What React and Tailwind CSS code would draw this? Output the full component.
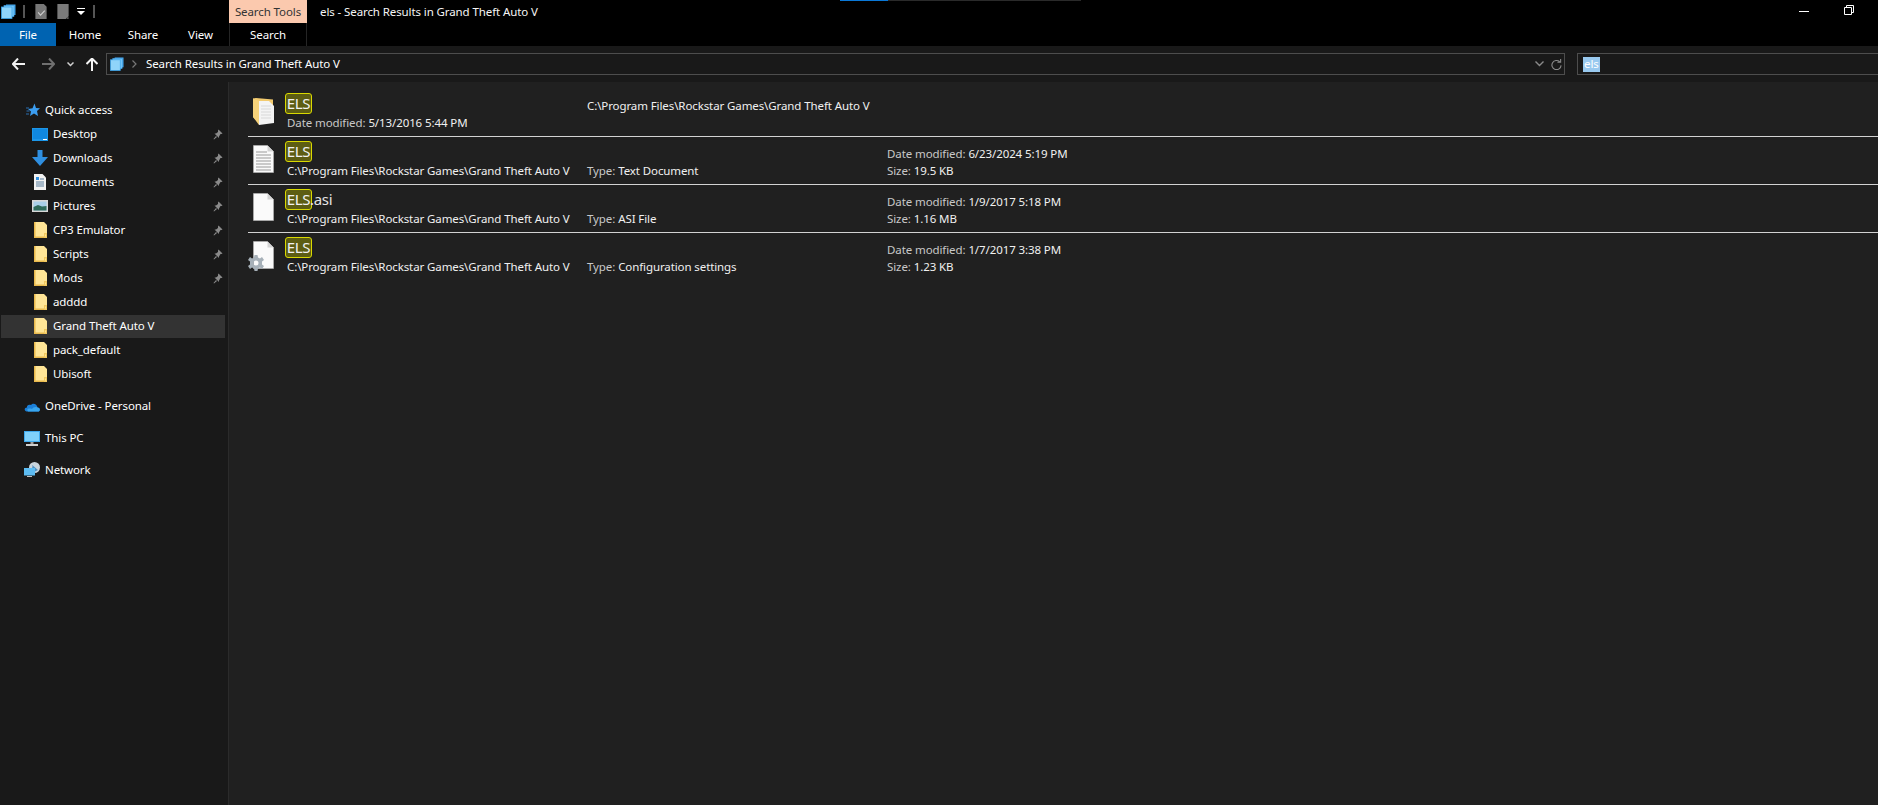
import React from 'react';

function StackIcon({ className }) {
  return (
    <svg viewBox="0 0 15 15" className={className}>
      <rect x="5" y="0.5" width="9.5" height="10.5" fill="#45a5ea" />
      <rect x="3" y="1.5" width="10" height="11" fill="#7cc9f7" stroke="#3a9de6" strokeWidth="0.6" />
      <rect x="0.5" y="3" width="10.5" height="11.5" fill="#8fd4fa" stroke="#39a3ea" strokeWidth="0.8" />
    </svg>
  );
}

function FolderIcon() {
  return (
    <svg viewBox="0 0 13 16" className="w-[13px] h-[16px] shrink-0">
      <path d="M0 0H10L13 3V16H0Z" fill="#ffe596" />
      <path d="M0 0H1.5V14.5H13V16H0Z" fill="#e9b94c" />
      <path d="M10 11H13V16H10Z" fill="#f2c85f" />
      <path d="M11 12.5H12V14.5H11Z" fill="#ffe596" />
    </svg>
  );
}

function PinIcon() {
  return (
    <svg viewBox="0 0 10 11" className="w-[10px] h-[11px] shrink-0">
      <path d="M5.5 0.5L9.5 4.5L8.5 5L7.5 5L6 7.5L6 9L1.5 4.5L3 4.5L5 3L5 1.5Z M3 7L0.5 10L1 10.5L4 8Z" fill="#8a8a8a" />
    </svg>
  );
}

function NavIcon({ type }) {
  if (type === 'star') {
    return (
      <svg viewBox="0 0 14 14" className="ml-[2px] w-[14px] h-[14px] shrink-0">
        <path d="M8.5 0.5L10 5L14 5.2L11 8L12 13L8 10.5L4 13L5 8.5L2 6L6.5 5.2Z" fill="#3b9df0" />
        <path d="M0 5H3M0.5 8H3.5M0 11H3" stroke="#2a6fb0" strokeWidth="1" />
      </svg>
    );
  }
  if (type === 'desktop') {
    return (
      <svg viewBox="0 0 16 13" className="w-[16px] h-[13px] shrink-0">
        <rect width="16" height="13" fill="#1c96e8" />
        <path d="M1 1H15V10L12 11H1Z" fill="#1088e0" />
        <path d="M11 11H15V12H11Z" fill="#ffffff" />
      </svg>
    );
  }
  if (type === 'downloads') {
    return (
      <svg viewBox="0 0 16 16" className="w-[16px] h-[16px] shrink-0">
        <path d="M5.5 0H10.5V7H16L8 16L0 7H5.5Z" fill="#2f8fe0" />
      </svg>
    );
  }
  if (type === 'documents') {
    return (
      <svg viewBox="0 0 12 16" className="w-[12px] h-[16px] shrink-0">
        <path d="M0 0H8.5L12 3.5V16H0Z" fill="#f2f2f2" />
        <path d="M2 3H5V6H2Z" fill="#2f8fe0" />
        <path d="M6 5H10M2 8H10M2 10H10M2 12H10" stroke="#5a7f9e" strokeWidth="1" />
      </svg>
    );
  }
  if (type === 'pictures') {
    return (
      <svg viewBox="0 0 16 12" className="w-[16px] h-[12px] shrink-0">
        <rect width="16" height="12" fill="#d8d8d8" />
        <rect x="1.5" y="1.5" width="13" height="9" fill="#a9cfe8" />
        <path d="M1.5 7L6 5L10 6.5L14.5 6V10.5H1.5Z" fill="#2f6b5a" />
      </svg>
    );
  }
  if (type === 'onedrive') {
    return (
      <svg viewBox="0 0 16 11" className="w-[16px] h-[11px] shrink-0">
        <path d="M4 10.5H14C16.5 10.5 16.5 6.5 13.5 6.5C13 3 9 1.5 7 4C4 3 2.5 5 3 6.5C0 6.5 -0.5 10.5 4 10.5Z" fill="#1b7fd8" />
        <path d="M4 10.5H14C16.5 10.5 16.5 6.5 13.5 6.5C11 5.5 9 6.5 8 8C5 7 2 8 4 10.5Z" fill="#39a6ee" />
      </svg>
    );
  }
  if (type === 'pc') {
    return (
      <svg viewBox="0 0 16 15" className="w-[16px] h-[15px] shrink-0">
        <rect width="16" height="11" fill="#3fa9ee" />
        <rect x="1" y="1" width="14" height="9" fill="#7fd0fa" />
        <path d="M6.5 11H9.5V13H6.5Z" fill="#a0a0a0" />
        <path d="M2 13H14V15H2Z" fill="#d0d0d0" />
      </svg>
    );
  }
  return (
    <svg viewBox="0 0 16 16" className="w-[16px] h-[16px] shrink-0">
      <circle cx="10.5" cy="5.5" r="5.5" fill="#c9d4dc" />
      <path d="M7 2C9 3 9 6 7 7L10 10L14 8" fill="#4f8fc0" />
      <rect y="6" width="11" height="7.5" fill="#5dbcf2" />
      <path d="M3 14H8V15H3Z" fill="#c0c0c0" />
    </svg>
  );
}

function SidebarRow({ label, icon, pinned, selected, child, className }) {
  return (
    <div className={`flex items-center h-6 ${className || ''}`}>
      <div className={`flex items-center w-[224px] ml-px h-[23px] ${selected ? 'bg-[#333333]' : ''} ${child ? 'pl-[31px]' : 'pl-[23px]'}`}>
        <div className="flex items-center justify-center shrink-0 w-[16px] mr-[5px]">
          {icon === 'folder' ? <FolderIcon /> : <NavIcon type={icon} />}
        </div>
        <span className="flex-1 text-white whitespace-nowrap">{label}</span>
        {pinned && <div className="mr-[2px] flex"><PinIcon /></div>}
      </div>
    </div>
  );
}

function Highlight() {
  return (
    <span className="inline-flex items-center justify-center w-[27px] h-[21px] bg-[#5d5d13] border border-[#d9d900] rounded-[3px] text-[15px] leading-none tracking-[-0.3px] text-[#f2f2f2]">
      ELS
    </span>
  );
}

function FileIcon({ type }) {
  if (type === 'folder') {
    return (
      <svg viewBox="0 0 21 27" className="w-[21px] h-[27px]">
        <path d="M0 0.5L3 0L20 1.5L20 23L6 25L0 19Z" fill="#f3cb6f" />
        <path d="M6 3L16 3L21 8V25L6 27Z" fill="#f4f4f4" />
        <path d="M8 8H18M8 11H18M8 14H18M8 17H18M8 20H18" stroke="#d8d8d8" strokeWidth="1" />
        <path d="M6 3L6 27L0 19V0.5Z" fill="#f6d27a" />
      </svg>
    );
  }
  const lines = type === 'text';
  return (
    <svg viewBox="0 0 21 28" className="w-[21px] h-[28px]">
      <path d="M0.5 0.5H14.5L20.5 6.5V27.5H0.5Z" fill="#fafafa" stroke="#b9b9b9" strokeWidth="0.6" />
      <path d="M14.5 0.5V6.5H20.5Z" fill="#d4d4d4" />
      {lines && <path d="M3 7H14M3 10H18M3 13H18M3 16H18M3 19H18M3 22H18M3 25H18" stroke="#9a9a9a" strokeWidth="1" />}
    </svg>
  );
}

function GearIcon() {
  return (
    <svg viewBox="0 0 16 16" className="absolute left-[-5px] bottom-[-2px] w-[16px] h-[16px]">
      <path
        fillRule="evenodd"
        d="M6.5 0H9.5L10 2.5L12 3.5L14 2L16 5L14 6.5V9.5L16 11L14 14L12 12.5L10 13.5L9.5 16H6.5L6 13.5L4 12.5L2 14L0 11L2 9.5V6.5L0 5L2 2L4 3.5L6 2.5ZM8 5.5A2.5 2.5 0 1 0 8 10.5A2.5 2.5 0 1 0 8 5.5Z"
        fill="#a6b0b8"
      />
    </svg>
  );
}

function Meta({ label, value }) {
  return (
    <div className="h-[17px] leading-[17px] whitespace-nowrap">
      <span className="text-[#c8c8c8]">{label}</span>
      <span className="ml-[3px] text-[#f0f0f0]">{value}</span>
    </div>
  );
}

const PATH = 'C:\\Program Files\\Rockstar Games\\Grand Theft Auto V';

const results = [
  { icon: 'text', suffix: '', type: 'Text Document', date: '6/23/2024 5:19 PM', size: '19.5 KB' },
  { icon: 'blank', suffix: '.asi', type: 'ASI File', date: '1/9/2017 5:18 PM', size: '1.16 MB' },
  { icon: 'config', suffix: '', type: 'Configuration settings', date: '1/7/2017 3:38 PM', size: '1.23 KB' },
];

function ResultRow({ item }) {
  return (
    <div className="flex h-12 border-b border-[#d2d2d2] last:border-b-0">
      <div className="w-[37px] pt-[8px] pl-[5px] relative">
        <div className="relative w-[21px]">
          <FileIcon type={item.icon} />
          {item.icon === 'config' && <GearIcon />}
        </div>
      </div>
      <div className="w-[302px] pt-[4px]">
        <div className="flex items-center h-[21px] text-[15px] text-[#e4e4e4]">
          <Highlight />
          {item.suffix && <span className="-ml-[2px] leading-none tracking-[-0.3px]">{item.suffix}</span>}
        </div>
        <div className="pl-[2px] h-[17px] leading-[17px] text-[#f0f0f0] whitespace-nowrap">{PATH}</div>
      </div>
      <div className="w-[300px] pt-[25px]">
        <Meta label="Type:" value={item.type} />
      </div>
      <div className="pt-[8px]">
        <Meta label="Date modified:" value={item.date} />
        <Meta label="Size:" value={item.size} />
      </div>
    </div>
  );
}

export default function App() {
  const quick = [
    { label: 'Desktop', icon: 'desktop', pinned: true },
    { label: 'Downloads', icon: 'downloads', pinned: true },
    { label: 'Documents', icon: 'documents', pinned: true },
    { label: 'Pictures', icon: 'pictures', pinned: true },
    { label: 'CP3 Emulator', icon: 'folder', pinned: true },
    { label: 'Scripts', icon: 'folder', pinned: true },
    { label: 'Mods', icon: 'folder', pinned: true },
    { label: 'adddd', icon: 'folder' },
    { label: 'Grand Theft Auto V', icon: 'folder', selected: true },
    { label: 'pack_default', icon: 'folder' },
    { label: 'Ubisoft', icon: 'folder' },
  ];

  return (
    <div className="relative flex flex-col h-screen w-full overflow-hidden bg-black text-[11.5px] tracking-[-0.1px] text-white font-['Noto_Sans','Open_Sans',sans-serif]">
      {/* find progress strip */}
      <div className="absolute left-[840px] top-0 flex w-[241px] h-px bg-[#2a2a2a]">
        <div className="w-[48px] bg-[#0a78d7]" />
      </div>

      {/* title bar */}
      <div className="flex items-center h-[23px] shrink-0">
        <StackIcon className="ml-[1px] w-[15px] h-[15px]" />
        <div className="ml-[7px] w-[2px] h-[13px] bg-[#555555]" />
        <svg viewBox="0 0 12 16" className="ml-[10px] w-[12px] h-[15px]">
          <path d="M0 0H9L12 3V16H0Z" fill="#777777" />
          <path d="M3 9L5.5 12L10 7" stroke="#cfcfcf" strokeWidth="1.2" fill="none" />
        </svg>
        <svg viewBox="0 0 12 16" className="ml-[10px] w-[12px] h-[15px]">
          <path d="M0 0H12V13L9 16H0Z" fill="#7a7a7a" />
          <path d="M10 14H12V16H10Z" fill="#5a5a5a" />
        </svg>
        <svg viewBox="0 0 8 7" className="ml-[8px] w-[8px] h-[7px]">
          <path d="M0 0H8V1H0ZM0 3H8L4 7Z" fill="#ffffff" />
        </svg>
        <div className="ml-[8px] w-[2px] h-[13px] bg-[#555555]" />
        <div className="ml-[134px] flex items-center justify-center w-[78px] h-[23px] bg-[#fbc9ae] text-[#333333]">
          Search Tools
        </div>
        <span className="ml-[13px] text-[#f5f5f5]">els - Search Results in Grand Theft Auto V</span>
        <div className="flex-1" />
        <div className="w-[10px] h-px bg-white" />
        <svg viewBox="0 0 10 10" className="ml-[35px] mr-[24px] w-[10px] h-[10px] mb-[4px]">
          <path d="M2.5 2.5V0.5H9.5V7.5H7.5M0.5 2.5H7.5V9.5H0.5Z" stroke="#ffffff" fill="none" />
        </svg>
      </div>

      {/* ribbon tabs */}
      <div className="flex items-center h-[23px] shrink-0">
        <div className="flex items-center justify-center w-[56px] h-full bg-[#0063b1]">File</div>
        <div className="w-[58px] text-center">Home</div>
        <div className="w-[58px] text-center">Share</div>
        <div className="w-[57px] text-center">View</div>
        <div className="flex items-center justify-center w-[78px] h-full border-x border-[#252525]">Search</div>
      </div>

      {/* address row */}
      <div className="flex items-center h-9 shrink-0 bg-[#191919]">
        <div className="flex items-center w-[106px] shrink-0 pl-[12px]">
          <svg viewBox="0 0 13 12" className="w-[13px] h-[12px]">
            <path d="M6 0.5L1 6L6 11.5M1 6H13" stroke="#f2f2f2" strokeWidth="2" fill="none" />
          </svg>
          <svg viewBox="0 0 13 12" className="ml-[17px] w-[13px] h-[12px]">
            <path d="M7 0.5L12 6L7 11.5M12 6H0" stroke="#707070" strokeWidth="2" fill="none" />
          </svg>
          <svg viewBox="0 0 7 5" className="ml-[12px] w-[7px] h-[5px]">
            <path d="M0.5 0.5L3.5 3.5L6.5 0.5" stroke="#d0d0d0" strokeWidth="1.5" fill="none" />
          </svg>
          <svg viewBox="0 0 12 13" className="ml-[12px] w-[12px] h-[13px]">
            <path d="M0.5 6L6 0.5L11.5 6M6 1V13" stroke="#f5f5f5" strokeWidth="2" fill="none" />
          </svg>
        </div>
        <div className="flex items-center w-[1459px] shrink-0 h-[22px] border border-[#4d4d4d]">
          <StackIcon className="ml-[3px] w-[14px] h-[14px]" />
          <svg viewBox="0 0 5 8" className="ml-[8px] w-[5px] h-[8px]">
            <path d="M0.5 0.5L4 4L0.5 7.5" stroke="#777777" strokeWidth="1.2" fill="none" />
          </svg>
          <span className="ml-[9px]">Search Results in Grand Theft Auto V</span>
          <div className="flex-1" />
          <svg viewBox="0 0 9 6" className="w-[9px] h-[6px] mr-[7px]">
            <path d="M0.5 0.5L4.5 4.5L8.5 0.5" stroke="#8a8a8a" strokeWidth="1.4" fill="none" />
          </svg>
          <svg viewBox="0 0 12 12" className="w-[11px] h-[11px] mr-[2px]">
            <path d="M9.5 3A5 5 0 1 0 11 7M7 3.5H10.5V0" stroke="#8a8a8a" strokeWidth="1.2" fill="none" />
          </svg>
        </div>
        <div className="flex items-center ml-[12px] w-[320px] shrink-0 h-[22px] border border-[#4d4d4d] pl-[5px]">
          <span className="bg-[#99c9ef] h-[15px] px-px leading-[14px] text-white">els</span>
        </div>
      </div>

      <div className="flex flex-1 min-h-0">
        {/* nav pane */}
        <div className="w-[229px] shrink-0 bg-[#191919] border-r border-[#2b2b2b] pt-[16px]">
          <SidebarRow label="Quick access" icon="star" />
          {quick.map((row) => (
            <SidebarRow key={row.label} {...row} child />
          ))}
          <SidebarRow label="OneDrive - Personal" icon="onedrive" className="mt-2" />
          <SidebarRow label="This PC" icon="pc" className="mt-2" />
          <SidebarRow label="Network" icon="network" className="mt-2" />
        </div>

        {/* results */}
        <div className="flex-1 bg-[#202020] pt-[7px] pl-[19px]">
          <div className="flex h-12 border-b border-[#d2d2d2]">
            <div className="w-[37px] pt-[9px] pl-[5px]">
              <FileIcon type="folder" />
            </div>
            <div className="w-[302px] pt-[4px]">
              <div className="flex items-center h-[21px]">
                <Highlight />
              </div>
              <div className="pl-[2px]">
                <Meta label="Date modified:" value="5/13/2016 5:44 PM" />
              </div>
            </div>
            <div className="pt-[8px]">
              <div className="h-[17px] leading-[17px] text-[#f0f0f0] whitespace-nowrap">{PATH}</div>
            </div>
          </div>
          {results.map((item) => (
            <ResultRow key={item.icon} item={item} />
          ))}
        </div>
      </div>
    </div>
  );
}
